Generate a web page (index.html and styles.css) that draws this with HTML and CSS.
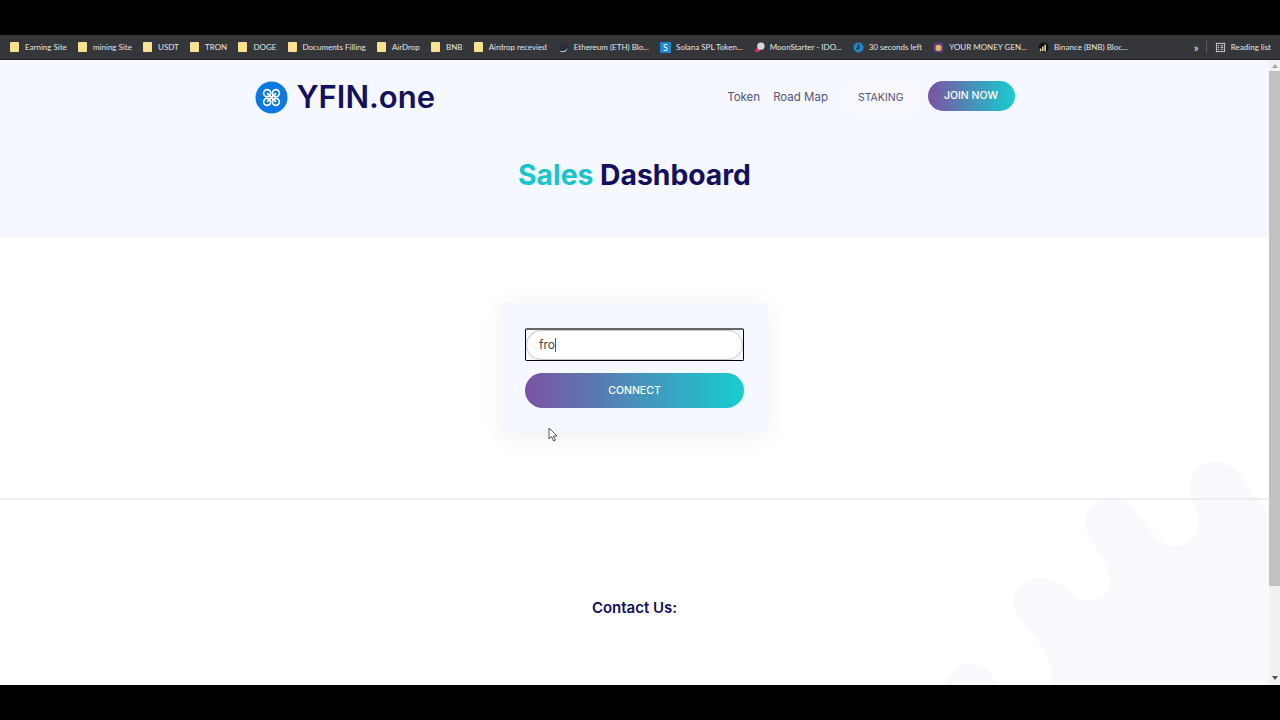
FILE: index.html
```html
<!DOCTYPE html>
<html lang="en">
<head>
    <meta charset="UTF-8">
    <title>YFIN.one Sales Dashboard</title>
    <link rel="stylesheet" href="styles.css">
</head>
<body>
    <div class="letterbox top"></div>

    <div class="bookmarks">
        <a class="mark"><span class="folder"></span>Earning Site</a>
        <a class="mark"><span class="folder"></span>mining Site</a>
        <a class="mark"><span class="folder"></span>USDT</a>
        <a class="mark"><span class="folder"></span>TRON</a>
        <a class="mark"><span class="folder"></span>DOGE</a>
        <a class="mark"><span class="folder"></span>Documents Filling</a>
        <a class="mark"><span class="folder"></span>AirDrop</a>
        <a class="mark"><span class="folder"></span>BNB</a>
        <a class="mark"><span class="folder"></span>Airdrop recevied</a>
        <a class="mark">
            <svg class="favicon" viewBox="0 0 12 12"><circle cx="6" cy="6" r="5.5" fill="#2b2f3a"/><path d="M1 9C4 11 8 10.5 10.5 6.5 10 11.5 3.5 12.5 1 9Z" fill="#d8dbe2"/></svg>
            Ethereum (ETH) Blo...
        </a>
        <a class="mark"><span class="favicon solana">S</span>Solana SPL Token...</a>
        <a class="mark">
            <svg class="favicon" viewBox="0 0 12 12"><path d="M0.5 10 4 4.5 8 8 4.5 11.5Z" fill="#e0246e"/><circle cx="7.5" cy="4.5" r="4" fill="#d9d4dc"/></svg>
            MoonStarter - IDO...
        </a>
        <a class="mark">
            <svg class="favicon" viewBox="0 0 12 12"><circle cx="6" cy="6" r="5.5" fill="#1d88c4"/><path d="M6 2.5V7H3.5" fill="none" stroke="#10324a" stroke-width="1.6"/></svg>
            30 seconds left
        </a>
        <a class="mark">
            <svg class="favicon" viewBox="0 0 12 12"><rect x="0.5" y="0.5" width="11" height="11" rx="3" fill="#5a3d78"/><circle cx="6" cy="6.5" r="3.4" fill="#e0b070"/></svg>
            YOUR MONEY GEN...
        </a>
        <a class="mark">
            <svg class="favicon" viewBox="0 0 12 12"><circle cx="6" cy="6" r="5.5" fill="#111"/><path d="M2 10V7h1.6v3Zm2.5 0V5h1.6v5Zm2.5 0V3h1.6v7Z" fill="#f3e6b0"/></svg>
            Binance (BNB) Bloc...
        </a>
        <span class="more">»</span>
        <span class="divider"></span>
        <a class="mark reading">
            <svg class="favicon" viewBox="0 0 12 12" fill="none" stroke="#d5d6d8"><rect x="1.5" y="1.5" width="9" height="9"/><path d="M3 4h1.5M6 4h3M3 6h1.5M6 6h3M3 8h1.5M6 8h3"/></svg>
            Reading list
        </a>
    </div>

    <div class="viewport">
        <div class="page">
            <svg class="blob" viewBox="920 450 349 235">
                <path d="M945 685C950 662 985 652 996 685ZM1053 685C1056 655 1030 635 1016 612 1004 590 1035 565 1062 586 1076 596 1082 602 1094 600 1112 598 1114 578 1104 560 1092 542 1080 528 1088 512 1098 494 1124 494 1138 514 1152 534 1160 546 1176 546 1194 546 1204 526 1196 508 1184 484 1190 462 1216 462 1236 462 1246 484 1254 496 1260 505 1269 510 1269 520V685Z"/>
            </svg>

            <header class="hero">
                <nav class="navbar">
                    <a class="brand">
                        <svg class="brand-icon" viewBox="0 0 34 34">
                            <circle cx="17" cy="17" r="16.5" fill="#0b78e3"/>
                            <g fill="none" stroke="#fff" stroke-width="1.7">
                                <circle cx="12.5" cy="12.5" r="3.6"/>
                                <circle cx="21.5" cy="12.5" r="3.6"/>
                                <circle cx="12.5" cy="21.5" r="3.6"/>
                                <circle cx="21.5" cy="21.5" r="3.6"/>
                                <path d="M12.5 12.5 21.5 21.5M21.5 12.5 12.5 21.5"/>
                            </g>
                        </svg>
                        YFIN.one
                    </a>
                    <div class="nav-links">
                        <a class="nav-link">Token</a>
                        <a class="nav-link">Road Map</a>
                        <a class="nav-pill">STAKING</a>
                        <a class="join-btn">JOIN NOW</a>
                    </div>
                </nav>
                <h1 class="title"><span class="accent">Sales</span> Dashboard</h1>
            </header>

            <main class="sale">
                <div class="card">
                    <div class="field">
                        <div class="field-inner">fro<span class="caret"></span></div>
                    </div>
                    <button class="connect">CONNECT</button>
                </div>
            </main>

            <footer class="contact">
                <h2 class="contact-title">Contact Us:</h2>
            </footer>

            <svg class="cursor" viewBox="0 0 10 15">
                <path d="M1 1V12L3.6 9.6 5.6 14 7.4 13.2 5.4 9H9Z" fill="#fff" stroke="#444" stroke-width="0.9"/>
            </svg>
        </div>

        <div class="scrollbar">
            <span class="arrow up"></span>
            <span class="thumb"></span>
            <span class="arrow down"></span>
        </div>
    </div>

    <div class="letterbox bottom"></div>
</body>
</html>
```

FILE: styles.css
```css
* {
    box-sizing: border-box;
}
html, body {
    height: 100%;
}
body {
    margin: 0;
    display: flex;
    flex-direction: column;
    overflow: hidden;
    background: #000;
    font-family: Inter, "Open Sans", sans-serif;
}
.letterbox {
    background: #000;
    flex: none;
}
.letterbox.top {
    height: 35px;
}
.letterbox.bottom {
    height: 35px;
}

/* browser bookmarks bar */
.bookmarks {
    height: 25px;
    flex: none;
    display: flex;
    align-items: center;
    gap: 11.2px;
    padding: 0 9px 0 10px;
    background: #35363a;
    border-bottom: 1px solid #222;
    font-family: Lato, "Open Sans", sans-serif;
    font-size: 8px;
    color: #e4e5e6;
    white-space: nowrap;
}
.mark {
    display: flex;
    align-items: center;
    gap: 5px;
}
.folder {
    width: 9px;
    height: 10px;
    margin-right: 1px;
    background: #fbe18e;
    border-radius: 1px;
}
.favicon {
    width: 11px;
    height: 11px;
    flex: none;
}
.solana {
    background: #1c87c9;
    color: #fff;
    font-size: 9px;
    line-height: 11px;
    text-align: center;
}
.more {
    margin-left: auto;
    font-size: 11px;
}
.divider {
    width: 1px;
    height: 12px;
    background: #5c5d60;
    margin-left: -4px;
}
.reading {
    margin-left: -3px;
}

/* page area */
.viewport {
    flex: 1;
    display: flex;
    min-height: 0;
}
.page {
    flex: 1;
    position: relative;
    overflow: hidden;
    background: #fff;
}
.blob {
    position: absolute;
    right: 0;
    bottom: 0;
    width: 349px;
    height: 235px;
    fill: #f7f9fc;
}
.hero {
    position: relative;
    height: 177px;
    padding-top: 20px;
    background: #f5f8fe;
}
.navbar {
    width: 760px;
    height: 34px;
    margin: 0 auto;
    display: flex;
    align-items: center;
    justify-content: space-between;
}
.brand {
    display: flex;
    align-items: center;
    gap: 9px;
    font-size: 31px;
    font-weight: 600;
    line-height: 34px;
    color: #14105f;
}
.brand-icon {
    width: 33px;
    height: 33px;
}
.nav-links {
    display: flex;
    align-items: center;
    font-size: 11.5px;
    color: #55537a;
}
.nav-link {
    margin-right: 13px;
}
.nav-pill {
    padding: 9px 16px;
    margin-left: 1px;
    margin-right: 8px;
    border-radius: 17px;
    background: #f7f9fe;
    box-shadow: 0 0 2px #fff;
    font-size: 10.5px;
}
.join-btn {
    width: 87px;
    height: 30px;
    margin-bottom: 3px;
    border-radius: 15px;
    background: linear-gradient(to right, #7b52a3, #17cdd0);
    color: #fff;
    font-size: 10.5px;
    font-weight: 500;
    line-height: 29px;
    text-align: center;
}
.title {
    margin: 41px 0 0;
    font-size: 28.3px;
    font-weight: 700;
    line-height: 40px;
    text-align: center;
    color: #14105f;
}
.accent {
    color: #17c6cc;
}
.sale {
    position: relative;
    height: 263px;
    padding-top: 66px;
    border-bottom: 2px solid #eceef2;
}
.card {
    width: 267px;
    height: 129px;
    margin: 0 auto;
    padding: 25px 24px;
    background: #f5f8fe;
    box-shadow: 0 4px 22px rgba(40, 50, 90, 0.07);
}
.field {
    height: 33px;
    border: 1.5px solid #000;
    border-top: 2px solid #666;
    border-radius: 2px;
    background: #f5f8fe;
}
.field-inner {
    height: 100%;
    padding-left: 12px;
    border: 1px solid #c4c4c4;
    border-radius: 16px;
    background: #fff;
    font-size: 12px;
    line-height: 28px;
    color: #444;
}
.caret {
    display: inline-block;
    width: 1px;
    height: 14px;
    background: #555;
    vertical-align: -3px;
}
.connect {
    display: block;
    width: 100%;
    height: 35px;
    margin-top: 12px;
    border: none;
    border-radius: 18px;
    background: linear-gradient(to right, #7b52a3, #17cdd0);
    color: #fff;
    font-family: inherit;
    font-size: 10.5px;
    font-weight: 500;
}
.contact {
    position: relative;
    padding-top: 98px;
}
.contact-title {
    margin: 0;
    font-size: 15px;
    font-weight: 600;
    line-height: 20px;
    text-align: center;
    color: #14105f;
}
.cursor {
    position: absolute;
    left: 548px;
    top: 367px;
    width: 10px;
    height: 15px;
}

/* scrollbar */
.scrollbar {
    width: 11px;
    flex: none;
    display: flex;
    flex-direction: column;
    align-items: center;
    background: #f1f1f1;
}
.arrow {
    width: 0;
    height: 0;
    flex: none;
    border-left: 3.5px solid transparent;
    border-right: 3.5px solid transparent;
}
.arrow.up {
    margin-top: 4px;
    border-bottom: 4px solid #a3a3a3;
}
.arrow.down {
    margin-bottom: 5px;
    border-top: 4px solid #505050;
}
.thumb {
    width: 100%;
    height: 515px;
    margin: 3px 0 auto;
    background: #c1c1c1;
}
```
